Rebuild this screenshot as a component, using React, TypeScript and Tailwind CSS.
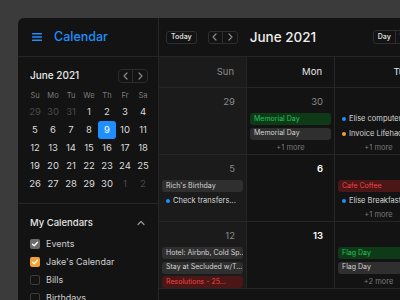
import React from 'react';

type Ev =
  | { kind: 'chip'; tone: 'green' | 'gray' | 'red'; label: string }
  | { kind: 'dot'; color: string; label: string }
  | { kind: 'more'; label: string };

interface Cell {
  day: string;
  muted?: boolean;
  events: Ev[];
}

const weeks: Cell[][] = [
  [
    { day: '29', muted: true, events: [] },
    {
      day: '30',
      muted: true,
      events: [
        { kind: 'chip', tone: 'green', label: 'Memorial Day' },
        { kind: 'chip', tone: 'gray', label: 'Memorial Day' },
        { kind: 'more', label: '+1 more' },
      ],
    },
    {
      day: '1',
      events: [
        { kind: 'dot', color: 'bg-[#1f8fff]', label: 'Elise computer...' },
        { kind: 'dot', color: 'bg-[#f5a033]', label: 'Invoice Lifehack...' },
        { kind: 'more', label: '+1 more' },
      ],
    },
  ],
  [
    {
      day: '5',
      muted: true,
      events: [
        { kind: 'chip', tone: 'gray', label: "Rich's Birthday" },
        { kind: 'dot', color: 'bg-[#1f8fff]', label: 'Check transfers...' },
      ],
    },
    { day: '6', events: [] },
    {
      day: '7',
      events: [
        { kind: 'chip', tone: 'red', label: 'Cafe Coffee' },
        { kind: 'dot', color: 'bg-[#1f8fff]', label: 'Elise Breakfast' },
        { kind: 'more', label: '+1 more' },
      ],
    },
  ],
  [
    {
      day: '12',
      muted: true,
      events: [
        { kind: 'chip', tone: 'gray', label: 'Hotel: Airbnb, Cold Sp...' },
        { kind: 'chip', tone: 'gray', label: 'Stay at Secluded w/T...' },
        { kind: 'chip', tone: 'red', label: 'Resolutions - 25...' },
      ],
    },
    { day: '13', events: [] },
    {
      day: '14',
      events: [
        { kind: 'chip', tone: 'green', label: 'Flag Day' },
        { kind: 'chip', tone: 'gray', label: 'Flag Day' },
        { kind: 'more', label: '+2 more' },
      ],
    },
  ],
];

const miniDays = [
  ['29', '30', '31', '1', '2', '3', '4'],
  ['5', '6', '7', '8', '9', '10', '11'],
  ['12', '13', '14', '15', '16', '17', '18'],
  ['19', '20', '21', '22', '23', '24', '25'],
  ['26', '27', '28', '29', '30', '1', '2'],
];

const Chevron = ({ dir }: { dir: 'left' | 'right' | 'up' }) => {
  const d = dir === 'left' ? 'M6 2 L3 5 L6 8' : dir === 'right' ? 'M4 2 L7 5 L4 8' : 'M2 6.5 L5 3.5 L8 6.5';
  return (
    <svg width="10" height="10" viewBox="0 0 10 10" fill="none">
      <path d={d} stroke="currentColor" strokeWidth="1.2" strokeLinecap="round" strokeLinejoin="round" />
    </svg>
  );
};

const Check = () => (
  <svg width="8" height="8" viewBox="0 0 8 8" fill="none">
    <path d="M1.5 4.2 L3.2 5.8 L6.5 2.2" stroke="white" strokeWidth="1.3" strokeLinecap="round" strokeLinejoin="round" />
  </svg>
);

const EventRow = ({ ev }: { ev: Ev }) => {
  if (ev.kind === 'more') {
    return <div className="h-[12px] flex items-center justify-center text-[7.5px] text-[#7a7a7a]">{ev.label}</div>;
  }
  if (ev.kind === 'dot') {
    return (
      <div className="h-[12px] flex items-center gap-[3px] pl-[4px] text-[7.5px] text-[#d6d6d6] whitespace-nowrap overflow-hidden">
        <span className={`w-[4px] h-[4px] rounded-full shrink-0 ${ev.color}`} />
        <span>{ev.label}</span>
      </div>
    );
  }
  const tone =
    ev.tone === 'green'
      ? 'bg-[#0f3a18] text-[#22c55e]'
      : ev.tone === 'red'
      ? 'bg-[#4a1616] text-[#ef4444]'
      : 'bg-[#2f2f2f] text-[#d4d4d4]';
  return (
    <div className={`h-[12px] rounded-[3px] flex items-center px-[4px] text-[7px] whitespace-nowrap overflow-hidden ${tone}`}>
      <span>{ev.label}</span>
    </div>
  );
};

const calendars = [
  { name: 'Events', box: 'bg-[#6b6b6b]', checked: true },
  { name: "Jake's Calendar", box: 'bg-[#f5a033]', checked: true },
  { name: 'Bills', box: 'border border-[#3c3c3c]', checked: false },
  { name: 'Birthdays', box: 'border border-[#3c3c3c]', checked: false },
];

export default function App() {
  const dayNames = ['Sun', 'Mon', 'Tue', 'Wed', 'Thu', 'Fri', 'Sat'];
  return (
    <div className="w-[400px] h-[300px] bg-[#3b3b3b] pt-[18px] pl-[18px] overflow-hidden" style={{ fontFamily: 'Inter, "Noto Sans", sans-serif' }}>
      <div className="flex w-full h-full bg-[#131313] rounded-tl-[6px] overflow-hidden">
        {/* Sidebar */}
        <div className="w-[141px] shrink-0 border-r border-[#262626] flex flex-col">
          <div className="h-[39px] shrink-0 border-b border-[#262626] flex items-center pl-[14px] gap-[12px]">
            <svg width="10" height="8" viewBox="0 0 10 8">
              <rect x="0" y="0" width="10" height="1.4" rx="0.5" fill="#1f8fff" />
              <rect x="0" y="3.3" width="10" height="1.4" rx="0.5" fill="#1f8fff" />
              <rect x="0" y="6.6" width="10" height="1.4" rx="0.5" fill="#1f8fff" />
            </svg>
            <span className="text-[12.5px] font-medium text-[#1f8fff] leading-none">Calendar</span>
          </div>

          {/* Mini calendar */}
          <div className="px-[8px] pt-[11px] pb-[10px] border-b border-[#262626]">
            <div className="flex items-center justify-between pl-[4px] pr-[2px]">
              <span className="text-[10px] font-medium text-[#e8e8e8]">June 2021</span>
              <div className="flex h-[14px] border border-[#2c2c2c] rounded-[4px] text-[#8a8a8a]">
                <div className="w-[14px] flex items-center justify-center border-r border-[#2c2c2c]"><Chevron dir="left" /></div>
                <div className="w-[14px] flex items-center justify-center"><Chevron dir="right" /></div>
              </div>
            </div>
            <div className="grid grid-cols-[repeat(7,18px)] mt-[6px]">
              {['Su', 'Mo', 'Tu', 'We', 'Th', 'Fr', 'Sa'].map((d) => (
                <div key={d} className="h-[14px] flex items-center justify-center text-[7.5px] text-[#7c7c7c]">{d}</div>
              ))}
              {miniDays.map((row, r) =>
                row.map((d, c) => {
                  const muted = (r === 0 && c < 3) || (r === 4 && c > 4);
                  const sel = r === 1 && c === 4;
                  return (
                    <div
                      key={`${r}-${c}`}
                      className={`h-[18px] flex items-center justify-center text-[9.5px] ${
                        sel ? 'bg-[#1f8fff] rounded-[3px] text-white' : muted ? 'text-[#4a4a4a]' : 'text-[#dcdcdc]'
                      }`}
                    >
                      {d}
                    </div>
                  );
                })
              )}
            </div>
          </div>

          {/* My calendars */}
          <div className="px-[12px] pt-[12px]">
            <div className="flex items-center justify-between h-[14px]">
              <span className="text-[9.5px] font-medium text-[#e4e4e4]">My Calendars</span>
              <span className="text-[#9a9a9a]"><Chevron dir="up" /></span>
            </div>
            <div className="flex flex-col mt-[5px]">
              {calendars.map((c) => (
                <div key={c.name} className="h-[18px] flex items-center gap-[6px]">
                  <span className={`w-[10px] h-[10px] rounded-[2px] flex items-center justify-center ${c.box}`}>
                    {c.checked && <Check />}
                  </span>
                  <span className="text-[9px] text-[#cfcfcf]">{c.name}</span>
                </div>
              ))}
            </div>
          </div>
        </div>

        {/* Main */}
        <div className="flex-1 min-w-0 flex flex-col overflow-hidden">
          <div className="h-[39px] shrink-0 border-b border-[#262626] flex items-center pl-[7px] whitespace-nowrap">
            <div className="h-[13px] px-[4px] flex items-center border border-[#2e2e2e] rounded-[3px] text-[7px] font-semibold text-[#d8d8d8]">Today</div>
            <div className="ml-[11px] flex h-[13px] border border-[#2e2e2e] rounded-[3px] text-[#8a8a8a]">
              <div className="w-[14px] flex items-center justify-center border-r border-[#2e2e2e]"><Chevron dir="left" /></div>
              <div className="w-[14px] flex items-center justify-center"><Chevron dir="right" /></div>
            </div>
            <span className="ml-[12px] w-[123px] shrink-0 text-[13.5px] font-medium text-[#eeeeee]">June 2021</span>
            <div className="flex h-[14px] border border-[#2e2e2e] rounded-[3px] text-[7px] font-semibold text-[#d8d8d8]">
              <div className="px-[4px] flex items-center border-r border-[#2e2e2e]">Day</div>
              <div className="px-[4px] flex items-center">Week</div>
            </div>
          </div>

          <div className="flex-1 overflow-hidden">
            <div className="grid grid-cols-[repeat(3,88px)] w-[264px]">
              {dayNames.slice(0, 3).map((d, i) => (
                <div
                  key={d}
                  className={`h-[31px] flex items-center justify-end pr-[12px] border-r border-b border-[#262626] text-[9.5px] ${
                    i === 0 ? 'bg-[#1b1b1b] text-[#8a8a8a]' : 'text-[#e6e6e6]'
                  }`}
                >
                  {d}
                </div>
              ))}
              {weeks.map((week, w) =>
                week.map((cell, i) => (
                  <div
                    key={`${w}-${i}`}
                    className={`h-[67px] border-r border-b border-[#262626] flex flex-col ${i === 0 ? 'bg-[#1b1b1b]' : ''}`}
                  >
                    <div
                      className={`h-[25px] pt-[7px] pr-[11px] text-right text-[9.5px] leading-[14px] ${
                        cell.muted ? 'text-[#8a8a8a]' : 'text-white font-semibold'
                      }`}
                    >
                      {cell.day}
                    </div>
                    <div className="flex flex-col gap-[2.5px] px-[3px]">
                      {cell.events.map((ev, k) => (
                        <EventRow key={k} ev={ev} />
                      ))}
                    </div>
                  </div>
                ))
              )}
            </div>
          </div>
        </div>
      </div>
    </div>
  );
}
